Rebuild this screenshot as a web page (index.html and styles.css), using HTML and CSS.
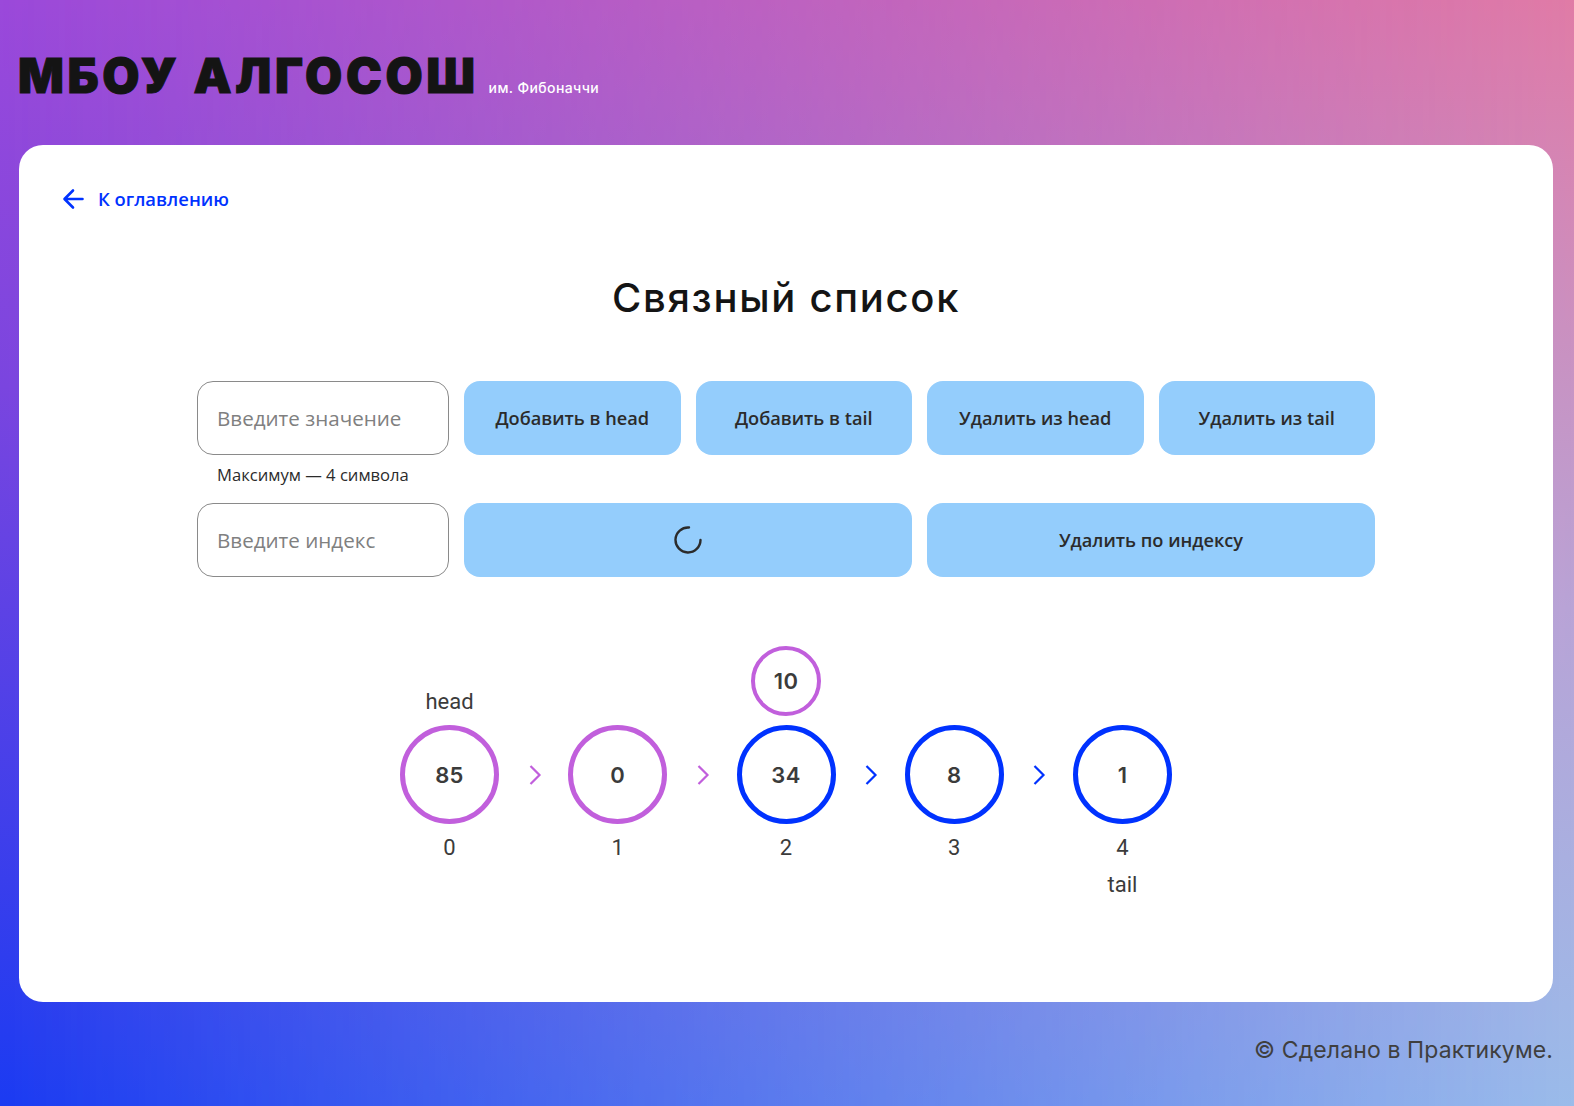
FILE: index.html
```html
<!doctype html>
<html lang="ru">

<head>
    <meta charset="utf-8">
    <title>МБОУ АЛГОСОШ</title>
    <link rel="stylesheet" href="styles.css">
</head>

<body>
    <header class="header">
        <h1 class="logo">МБОУ АЛГОСОШ</h1>
        <span class="logo-sub">им. Фибоначчи</span>
    </header>

    <main class="card">
        <a class="back" href="#">
            <svg class="back-icon" width="24" height="24" viewBox="0 0 24 24" fill="none">
                <path d="M20.5 12H3M11 3.5 2.5 12l8.5 8.5" stroke="#0032ff" stroke-width="2.6" stroke-linecap="round" stroke-linejoin="round"/>
            </svg>
            К оглавлению
        </a>

        <h2 class="title">Связный список</h2>

        <form class="controls">
            <div class="field">
                <input class="input" type="text" placeholder="Введите значение">
            </div>
            <button class="btn" type="button">Добавить в head</button>
            <button class="btn" type="button">Добавить в tail</button>
            <button class="btn" type="button">Удалить из head</button>
            <button class="btn" type="button">Удалить из tail</button>
            <p class="hint">Максимум — 4 символа</p>
            <div class="field">
                <input class="input" type="text" placeholder="Введите индекс">
            </div>
            <button class="btn btn-wide" type="button" aria-label="Загрузка">
                <svg width="28" height="28" viewBox="0 0 28 28" fill="none">
                    <path d="M15 1.5A12.5 12.5 0 1 0 26.5 14" stroke="#2b2b2b" stroke-width="2.4" stroke-linecap="round"/>
                </svg>
            </button>
            <button class="btn btn-wide" type="button">Удалить по индексу</button>
        </form>

        <ul class="list">
            <li class="node">
                <div class="node-top">head</div>
                <div class="circle circle-pink">85</div>
                <div class="node-index">0</div>
            </li>
            <li class="arrow arrow-pink">
                <svg width="16" height="20" viewBox="0 0 16 20" fill="none"><path d="M4.5 1l9 9-9 9" stroke="currentColor" stroke-width="2.2"/></svg>
            </li>
            <li class="node">
                <div class="node-top"></div>
                <div class="circle circle-pink">0</div>
                <div class="node-index">1</div>
            </li>
            <li class="arrow arrow-pink">
                <svg width="16" height="20" viewBox="0 0 16 20" fill="none"><path d="M4.5 1l9 9-9 9" stroke="currentColor" stroke-width="2.2"/></svg>
            </li>
            <li class="node">
                <div class="circle circle-small">10</div>
                <div class="node-top"></div>
                <div class="circle circle-blue">34</div>
                <div class="node-index">2</div>
            </li>
            <li class="arrow">
                <svg width="16" height="20" viewBox="0 0 16 20" fill="none"><path d="M4.5 1l9 9-9 9" stroke="currentColor" stroke-width="2.2"/></svg>
            </li>
            <li class="node">
                <div class="node-top"></div>
                <div class="circle circle-blue">8</div>
                <div class="node-index">3</div>
            </li>
            <li class="arrow">
                <svg width="16" height="20" viewBox="0 0 16 20" fill="none"><path d="M4.5 1l9 9-9 9" stroke="currentColor" stroke-width="2.2"/></svg>
            </li>
            <li class="node">
                <div class="node-top"></div>
                <div class="circle circle-blue">1</div>
                <div class="node-index">4</div>
                <div class="node-tail">tail</div>
            </li>
        </ul>
    </main>

    <footer class="footer">© Сделано в Практикуме.</footer>
</body>

</html>
```

FILE: styles.css
```css
* {
    box-sizing: border-box;
}

html,
body {
    height: 100%;
}

body {
    position: relative;
    margin: 0;
    height: 1106px;
    overflow: hidden;
    display: flex;
    flex-direction: column;
    padding: 0 21px 0 19px;
    font-family: "Open Sans", "Noto Sans", sans-serif;
    color: #2b2b2b;
    background: linear-gradient(to bottom, #9b49da 0%, #7a45df 35%, #1b3bf2 100%);
}

/* правая половина фона, плавно поверх левой */
body::before {
    content: "";
    position: absolute;
    inset: 0;
    background: linear-gradient(to bottom, #e07ba6 0%, #b9a4d6 55%, #9bbcea 100%);
    -webkit-mask-image: linear-gradient(to right, transparent, black);
    mask-image: linear-gradient(to right, transparent, black);
}

.header,
.card,
.footer {
    position: relative;
}

.header {
    height: 145px;
    display: flex;
    align-items: baseline;
    padding-top: 47px;
    gap: 10px;
}

.logo {
    margin: 0 0 0 -1px;
    font-family: Inter, sans-serif;
    font-weight: 900;
    font-size: 48px;
    line-height: 58px;
    letter-spacing: 3.6px;
    -webkit-text-stroke: 1px #141414;
    color: #141414;
}

.logo-sub {
    font-family: Inter, sans-serif;
    font-size: 14px;
    font-weight: 500;
    letter-spacing: 0.4px;
    color: #fff;
}

.card {
    height: 857px;
    background: #fff;
    border-radius: 24px;
    padding: 39px 43px 0;
    display: flex;
    flex-direction: column;
    align-items: center;
}

.back {
    align-self: flex-start;
    display: flex;
    align-items: center;
    gap: 12px;
    height: 28px;
    font-size: 18.4px;
    font-weight: 600;
    color: #0032ff;
    text-decoration: none;
}

.back-icon {
    margin-top: 2px;
}

.title {
    margin: 61px 0 0;
    font-family: Inter, sans-serif;
    font-weight: 500;
    font-size: 40px;
    line-height: 50px;
    letter-spacing: 1.7px;
    color: #141414;
}

.controls {
    display: grid;
    grid-template-columns: 252px repeat(4, 216.5px);
    grid-template-rows: 74px 48px 74px;
    column-gap: 15px;
    margin-top: 58px;
}

.field {
    display: flex;
}

.input {
    width: 100%;
    border: 1px solid #8a8a8a;
    border-radius: 16px;
    padding: 0 19px;
    font-family: inherit;
    font-size: 20.6px;
    background: #fff;
}

.input::placeholder {
    color: #808080;
}

.hint {
    grid-column: 1 / -1;
    margin: 0;
    padding: 9px 0 0 20px;
    font-size: 16.6px;
    line-height: 22px;
    color: #2b2b2b;
}

.btn {
    border: 0;
    border-radius: 16px;
    background: #94cdfc;
    font-family: inherit;
    font-size: 18.2px;
    font-weight: 600;
    color: #2b2b2b;
    display: flex;
    align-items: center;
    justify-content: center;
}

.btn-wide {
    grid-column: span 2;
}

.list {
    list-style: none;
    margin: 69px 0 0;
    padding: 0;
    display: flex;
}

.node {
    position: relative;
    width: 99px;
    display: flex;
    flex-direction: column;
    align-items: center;
    font-family: Roboto, sans-serif;
    font-size: 22px;
    color: #3b3b3b;
}

.node-top {
    height: 79px;
    padding-top: 42px;
    line-height: 28px;
}

.node-index {
    margin-top: 10px;
    line-height: 28px;
}

.node-tail {
    margin-top: 9px;
    line-height: 28px;
}

.circle {
    width: 99px;
    height: 99px;
    flex: none;
    border-radius: 50%;
    border: 5px solid #0032ff;
    display: flex;
    align-items: center;
    justify-content: center;
    font-family: Inter, sans-serif;
    font-size: 22px;
    font-weight: 600;
    letter-spacing: 0.4px;
    color: #3b3b3b;
}

.circle-pink {
    border-color: #c15fdc;
}

.circle-small {
    position: absolute;
    top: 0;
    left: 14.5px;
    width: 70px;
    height: 70px;
    border-width: 4px;
    border-color: #c15fdc;
}

.arrow {
    width: 69.25px;
    height: 99px;
    margin-top: 79px;
    display: flex;
    align-items: center;
    justify-content: center;
    color: #0032ff;
}

.arrow-pink {
    color: #c15fdc;
}

.footer {
    margin-top: 29px;
    text-align: right;
    font-family: Inter, sans-serif;
    font-size: 23px;
    line-height: 38px;
    letter-spacing: 0.12px;
    color: #3f3f3f;
}
```
